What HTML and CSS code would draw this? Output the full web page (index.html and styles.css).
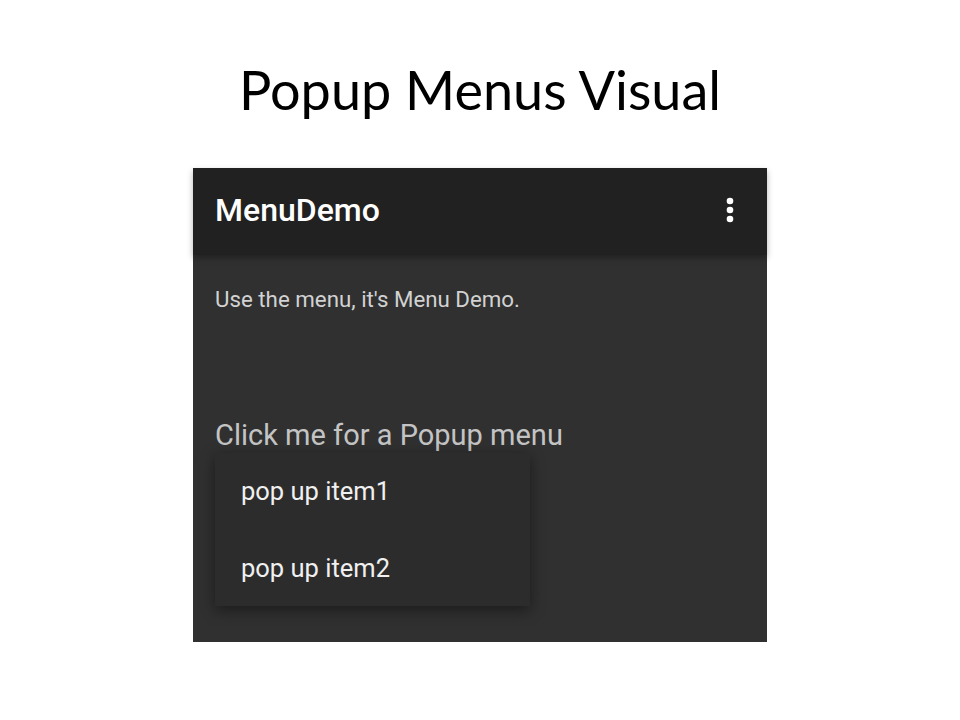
FILE: index.html
```html
<!DOCTYPE html>
<html lang="en">
<head>
    <meta charset="UTF-8">
    <title>Popup Menus Visual</title>
    <link rel="stylesheet" href="styles.css">
</head>
<body>
    <div class="slide">
        <h1 class="slide-title">Popup Menus Visual</h1>

        <div class="phone">
            <header class="app-bar">
                <span class="app-title">MenuDemo</span>
                <svg class="overflow-icon" width="8" height="26" viewBox="0 0 8 26">
                    <circle cx="4" cy="4" r="3.3" fill="#fff"/>
                    <circle cx="4" cy="13" r="3.3" fill="#fff"/>
                    <circle cx="4" cy="22" r="3.3" fill="#fff"/>
                </svg>
            </header>

            <main class="app-content">
                <p class="intro">Use the menu, it's Menu Demo.</p>
                <div class="popup-anchor">
                    <p class="popup-trigger">Click me for a Popup menu</p>
                    <ul class="popup-menu">
                        <li>pop up item1</li>
                        <li>pop up item2</li>
                    </ul>
                </div>
            </main>
        </div>
    </div>
</body>
</html>
```

FILE: styles.css
```css
/* General */
body, html {
    margin: 0;
    padding: 0;
    background-color: #ffffff;
}

.slide {
    width: 960px;
    height: 720px;
    display: flex;
    flex-direction: column;
    align-items: center;
}

.slide-title {
    margin: 58px 0 0;
    font-family: "Lato", "Open Sans", sans-serif;
    font-weight: 400;
    font-size: 54px;
    line-height: 64px;
    color: #000000;
}

/* Phone screenshot */
.phone {
    margin-top: 46px;
    width: 574px;
    height: 474px;
    background-color: #303030;
    font-family: Roboto, "Noto Sans", sans-serif;
    display: flex;
    flex-direction: column;
}

.app-bar {
    height: 87px;
    flex-shrink: 0;
    background-color: #212121;
    display: flex;
    align-items: center;
    justify-content: space-between;
    padding: 0 33px 0 22px;
    box-shadow: 0 3px 6px rgba(0,0,0,0.3);
    position: relative;
    z-index: 1;
}

.app-title {
    color: #ffffff;
    font-size: 32px;
    font-weight: 500;
    margin-top: -4px;
}

.overflow-icon {
    margin-top: -3px;
}

.app-content {
    padding: 0 22px;
}

.intro {
    margin: 31px 0 0;
    font-size: 22.3px;
    line-height: 26px;
    color: #d2d2d2;
}

.popup-anchor {
    margin-top: 106px;
    position: relative;
}

.popup-trigger {
    margin: 0;
    font-size: 29px;
    line-height: 34px;
    color: #c4c4c4;
}

.popup-menu {
    list-style: none;
    margin: 0;
    padding: 0;
    position: absolute;
    top: 35px;
    left: 0;
    width: 315px;
    height: 153px;
    background-color: #2c2c2c;
    box-shadow: 0 4px 14px rgba(0,0,0,0.45);
}

.popup-menu li {
    height: 77px;
    line-height: 77px;
    padding-left: 26px;
    font-size: 25.5px;
    color: #f0f0f0;
}
```
